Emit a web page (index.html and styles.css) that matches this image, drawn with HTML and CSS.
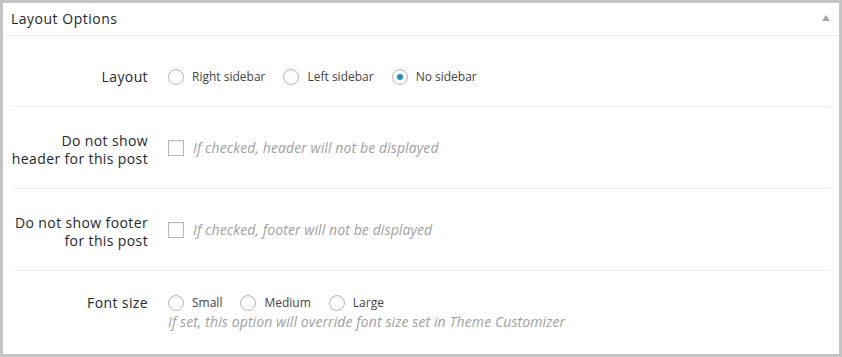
FILE: index.html
```html
<!DOCTYPE html>
<html lang="en">
<head>
    <meta charset="UTF-8">
    <meta name="viewport" content="width=device-width, initial-scale=1.0">
    <title>Layout Options</title>
    <link rel="stylesheet" href="styles.css">
</head>
<body>
    <div class="postbox">
        <div class="postbox-header">
            <h2>Layout Options</h2>
            <span class="toggle-arrow"></span>
        </div>
        <div class="inside">
            <!-- Layout -->
            <div class="option-row">
                <div class="option-label">Layout</div>
                <div class="option-field">
                    <div class="choices">
                        <label class="choice"><input type="radio" name="layout"> Right sidebar</label>
                        <label class="choice"><input type="radio" name="layout"> Left sidebar</label>
                        <label class="choice"><input type="radio" name="layout" checked> No sidebar</label>
                    </div>
                </div>
            </div>
            <!-- Header -->
            <div class="option-row">
                <div class="option-label">Do not show<br>header for this post</div>
                <div class="option-field checkbox-field">
                    <label class="check"><input type="checkbox"> <span class="description">If checked, header will not be displayed</span></label>
                </div>
            </div>
            <!-- Footer -->
            <div class="option-row">
                <div class="option-label">Do not show footer<br>for this post</div>
                <div class="option-field checkbox-field">
                    <label class="check"><input type="checkbox"> <span class="description">If checked, footer will not be displayed</span></label>
                </div>
            </div>
            <!-- Font size -->
            <div class="option-row last">
                <div class="option-label">Font size</div>
                <div class="option-field">
                    <div class="choices">
                        <label class="choice"><input type="radio" name="fontsize"> Small</label>
                        <label class="choice"><input type="radio" name="fontsize"> Medium</label>
                        <label class="choice"><input type="radio" name="fontsize"> Large</label>
                    </div>
                    <p class="description">If set, this option will override font size set in Theme Customizer</p>
                </div>
            </div>
        </div>
    </div>
</body>
</html>
```

FILE: styles.css
```css
body {
    font-family: "Open Sans", "Liberation Sans", sans-serif;
    margin: 0;
    padding: 3px;
    background: #c4c4c4;
    color: #23282d;
}
.postbox {
    background: #ffffff;
    height: 351px;
    box-sizing: border-box;
}
.postbox-header {
    display: flex;
    justify-content: space-between;
    align-items: center;
    height: 32px;
    padding: 0 9px 0 8px;
    border-bottom: 1px solid #eeeeee;
}
.postbox-header h2 {
    margin: 0;
    font-size: 14px;
    font-weight: normal;
    letter-spacing: 0.5px;
    line-height: 32px;
}
.toggle-arrow {
    width: 0;
    height: 0;
    border-left: 4px solid transparent;
    border-right: 4px solid transparent;
    border-bottom: 6px solid #a0a5aa;
    margin-top: -2px;
}
.inside {
    padding: 7px 8px 0 8px;
}
.option-row {
    display: grid;
    grid-template-columns: 137px 1fr;
    column-gap: 20px;
    align-items: start;
    padding: 25px 0 20px;
    border-bottom: 1px solid #eeeeee;
}
.option-row.last {
    padding-top: 23px;
    border-bottom: none;
}
.option-label {
    text-align: right;
    font-size: 14px;
    letter-spacing: 0.38px;
    line-height: 18px;
    white-space: nowrap;
}
.option-field {
    font-size: 12px;
    line-height: 18px;
    color: #444444;
}
.checkbox-field {
    align-self: center;
    padding-bottom: 5px;
}
.choices {
    display: flex;
    gap: 18px;
}
.choice, .check {
    display: flex;
    align-items: center;
    gap: 8px;
}
input[type="radio"], input[type="checkbox"] {
    appearance: none;
    -webkit-appearance: none;
    margin: 0;
    width: 16px;
    height: 16px;
    border: 1px solid #b4b9be;
    background: #ffffff;
    box-shadow: inset 0 1px 2px rgba(0, 0, 0, 0.07);
    box-sizing: border-box;
    flex-shrink: 0;
}
input[type="radio"] {
    border-radius: 50%;
    display: flex;
    align-items: center;
    justify-content: center;
}
input[type="radio"]:checked::before {
    content: "";
    width: 6px;
    height: 6px;
    border-radius: 50%;
    background: #1e8cbe;
}
.description {
    font-size: 14px;
    font-style: italic;
    letter-spacing: 0.1px;
    color: #a0a0a0;
    line-height: 18px;
    margin: 0;
}
.check .description {
    margin-left: 1px;
}
.option-field p.description {
    margin-top: 1px;
}
```
